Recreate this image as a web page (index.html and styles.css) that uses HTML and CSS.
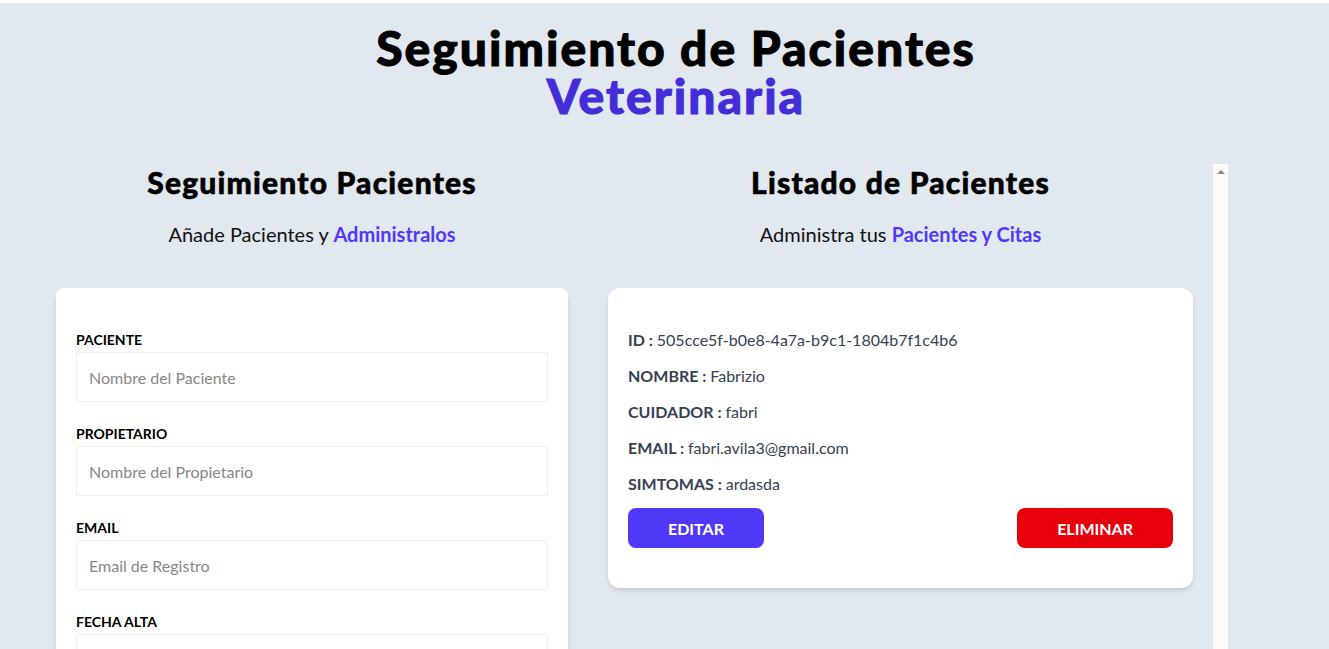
FILE: index.html
```html
<!DOCTYPE html>
<html lang="es">
<head>
<meta charset="utf-8">
<title>Veterinaria</title>
<link rel="stylesheet" href="styles.css">
</head>
<body>
<div class="page">
  <h1 class="title">Seguimiento de Pacientes <span class="brand">Veterinaria</span></h1>

  <div class="main">
    <section class="form-col">
      <h2 class="col-title">Seguimiento Pacientes</h2>
      <p class="col-sub">Añade Pacientes y <span class="accent">Administralos</span></p>

      <form class="card form-card">
        <div class="field">
          <label class="label" for="mascota">Paciente</label>
          <input class="input" id="mascota" type="text" placeholder="Nombre del Paciente">
        </div>
        <div class="field">
          <label class="label" for="propietario">Propietario</label>
          <input class="input" id="propietario" type="text" placeholder="Nombre del Propietario">
        </div>
        <div class="field">
          <label class="label" for="email">Email</label>
          <input class="input" id="email" type="email" placeholder="Email de Registro">
        </div>
        <div class="field">
          <label class="label" for="alta">Fecha Alta</label>
          <input class="input" id="alta" type="text">
        </div>
        <div class="field">
          <label class="label" for="sintomas">Síntomas</label>
          <textarea class="input" id="sintomas" placeholder="Describe los Síntomas"></textarea>
        </div>
        <button class="submit" type="button">Agregar Paciente</button>
      </form>
    </section>

    <section class="list-col">
      <div class="list-body">
        <h2 class="col-title">Listado de Pacientes</h2>
        <p class="col-sub">Administra tus <span class="accent">Pacientes y Citas</span></p>

        <div class="card patient">
          <p class="row">ID : <span class="val">505cce5f-b0e8-4a7a-b9c1-1804b7f1c4b6</span></p>
          <p class="row">Nombre : <span class="val">Fabrizio</span></p>
          <p class="row">Cuidador : <span class="val">fabri</span></p>
          <p class="row">Email : <span class="val">fabri.avila3@gmail.com</span></p>
          <p class="row">Simtomas : <span class="val">ardasda</span></p>
          <div class="actions">
            <button class="btn btn-edit" type="button">Editar</button>
            <button class="btn btn-delete" type="button">Eliminar</button>
          </div>
        </div>
      </div>
      <div class="scrollbar" aria-hidden="true"><span class="scroll-up"></span></div>
    </section>
  </div>
</div>
</body>
</html>
```

FILE: styles.css
```css
html {
  background: #ffffff;
  overflow: hidden;
}

body {
  margin: 0;
  padding-top: 3px;
  font-family: "Lato", "Noto Sans", sans-serif;
  color: #000;
}

.page {
  background: #e2e8f0;
  min-height: 100vh;
  padding-top: 21px;
}

.title {
  margin: 0 auto;
  padding-left: 23px;
  font-size: 48px;
  line-height: 48px;
  font-weight: 900;
  letter-spacing: 2px;
  -webkit-text-stroke: 1px currentColor;
  text-align: center;
}

.brand {
  display: block;
  color: #432dd7;
}

.main {
  display: flex;
  margin-top: 44px;
  padding-left: 36px;
}

.form-col {
  width: 552px;
  flex: none;
}

.list-col {
  width: 640px;
  height: 100vh;
  flex: none;
  display: flex;
}

.list-body {
  flex: 1;
  min-width: 0;
}

.scrollbar {
  width: 15px;
  flex: none;
  background: #fbfbfb;
  padding-top: 6px;
  box-sizing: border-box;
}

.scroll-up {
  display: block;
  width: 0;
  height: 0;
  margin: 0 auto;
  border-left: 4px solid transparent;
  border-right: 4px solid transparent;
  border-bottom: 4px solid #898989;
}

.col-title {
  margin: 0;
  font-size: 30px;
  line-height: 36px;
  font-weight: 900;
  letter-spacing: 1.2px;
  -webkit-text-stroke: 0.6px currentColor;
  text-align: center;
}

.col-sub {
  margin: 20px 0 40px;
  font-size: 20px;
  line-height: 28px;
  text-align: center;
  color: #111;
}

.accent {
  color: #4f39f6;
  font-weight: 700;
}

.card {
  background: #fff;
  margin: 0 20px;
  padding: 40px 20px;
  box-shadow: 0 4px 6px -1px rgba(0, 0, 0, 0.1), 0 2px 4px -2px rgba(0, 0, 0, 0.1);
}

.form-card {
  border-radius: 8px;
  margin-bottom: 40px;
}

.field {
  margin-bottom: 20px;
}

.label {
  display: block;
  font-size: 14px;
  line-height: 24px;
  font-weight: 700;
  text-transform: uppercase;
  color: #000;
}

.input {
  display: block;
  box-sizing: border-box;
  width: 100%;
  height: 50px;
  margin: 0;
  padding: 12px;
  border: 1px solid #f0f0f0;
  border-radius: 2px;
  font-family: inherit;
  font-size: 16px;
  line-height: 24px;
  color: #222;
  background: #fff;
}

textarea.input {
  height: 80px;
  resize: none;
}

.input::placeholder {
  color: #888;
}

.submit {
  width: 100%;
  padding: 12px;
  border: 0;
  border-radius: 6px;
  background: #4f39f6;
  color: #fff;
  font-family: inherit;
  font-size: 16px;
  font-weight: 700;
  text-transform: uppercase;
}

.patient {
  border-radius: 12px;
}

.row {
  margin: 0 0 12px;
  font-size: 16px;
  line-height: 24px;
  font-weight: 700;
  text-transform: uppercase;
  color: #364153;
}

.val {
  font-weight: 400;
  text-transform: none;
}

.actions {
  display: flex;
  justify-content: space-between;
}

.btn {
  height: 40px;
  padding: 0 40px;
  border: 0;
  border-radius: 8px;
  color: #fff;
  font-family: inherit;
  font-size: 16px;
  font-weight: 700;
  text-transform: uppercase;
}

.btn-edit {
  background: #4f39f6;
}

.btn-delete {
  background: #e7000b;
}
```
